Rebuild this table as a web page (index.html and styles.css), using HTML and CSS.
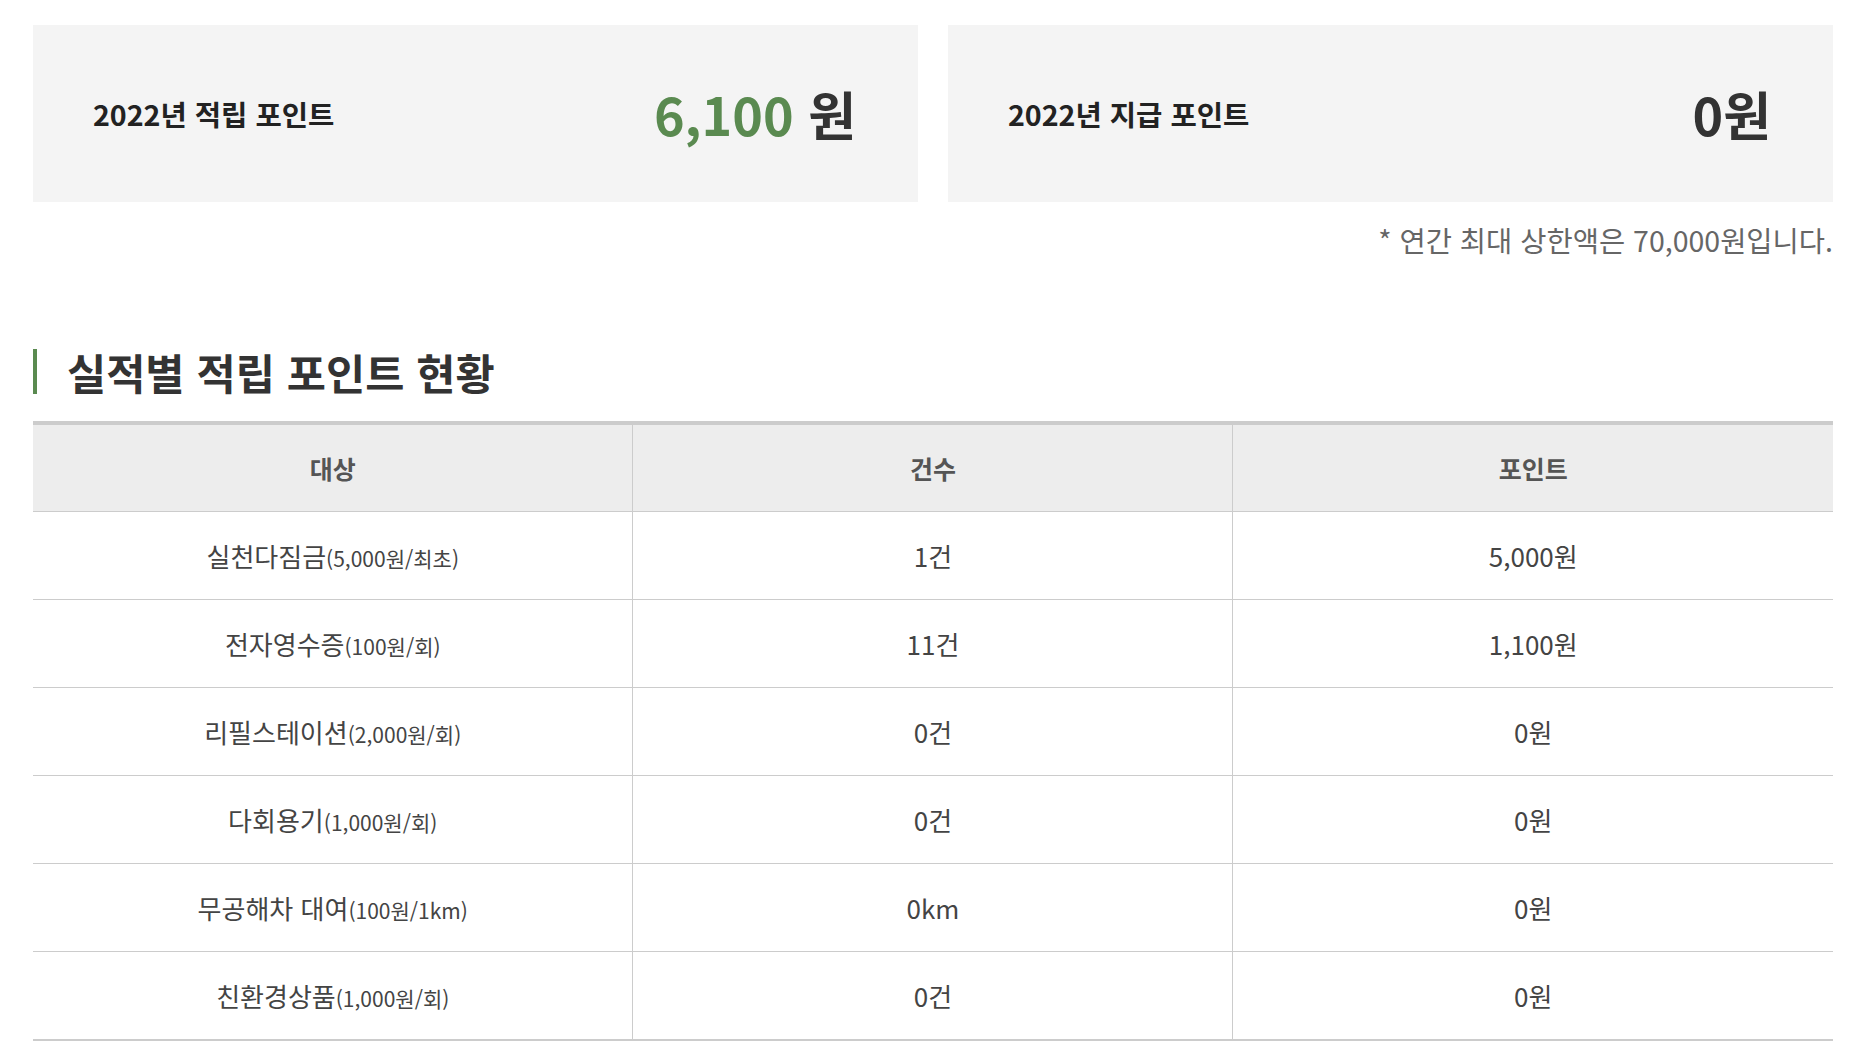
FILE: index.html
```html
<!DOCTYPE html>
<html lang="ko">
<head>
<meta charset="utf-8">
<title>포인트 현황</title>
<link rel="stylesheet" href="styles.css">
</head>
<body>
<div class="page">
  <div class="summary">
    <div class="sum-box">
      <span class="sum-label">2022년 적립 포인트</span>
      <span class="sum-value"><span class="num-green">6,100</span> 원</span>
    </div>
    <div class="sum-box">
      <span class="sum-label">2022년 지급 포인트</span>
      <span class="sum-value">0원</span>
    </div>
  </div>
  <p class="note">* 연간 최대 상한액은 70,000원입니다.</p>

  <h2 class="section-title">실적별 적립 포인트 현황</h2>

  <table class="point-table">
    <colgroup>
      <col class="col-third"><col class="col-third"><col class="col-third">
    </colgroup>
    <thead>
      <tr><th>대상</th><th>건수</th><th>포인트</th></tr>
    </thead>
    <tbody>
      <tr><td>실천다짐금<span class="sub">(5,000원/최초)</span></td><td>1건</td><td>5,000원</td></tr>
      <tr><td>전자영수증<span class="sub">(100원/회)</span></td><td>11건</td><td>1,100원</td></tr>
      <tr><td>리필스테이션<span class="sub">(2,000원/회)</span></td><td>0건</td><td>0원</td></tr>
      <tr><td>다회용기<span class="sub">(1,000원/회)</span></td><td>0건</td><td>0원</td></tr>
      <tr><td>무공해차 대여<span class="sub">(100원/1km)</span></td><td>0km</td><td>0원</td></tr>
      <tr><td>친환경상품<span class="sub">(1,000원/회)</span></td><td>0건</td><td>0원</td></tr>
    </tbody>
  </table>
</div>
</body>
</html>
```
FILE: styles.css
```css
html, body {
  margin: 0;
  padding: 0;
  background: #ffffff;
}
body {
  font-family: "Noto Sans CJK KR", "Noto Sans", sans-serif;
  color: #333333;
}
.page {
  width: 1800px;
  padding: 25px 0 0 33px;
}
.summary {
  display: flex;
  gap: 30px;
}
.sum-box {
  flex: 1;
  height: 177px;
  background: #f4f4f4;
  display: flex;
  align-items: center;
  justify-content: space-between;
  padding: 0 62px 0 60px;
}
.sum-label {
  font-size: 28.6px;
  font-weight: 700;
  color: #222222;
}
.sum-value {
  font-size: 52px;
  font-weight: 700;
  color: #333333;
  line-height: 1;
}
.num-green {
  color: #5a8a50;
}
.note {
  margin: 19px 0 0 0;
  text-align: right;
  font-size: 28.5px;
  line-height: 38px;
  color: #666666;
}
.section-title {
  margin: 90px 0 0 0;
  border-left: 4px solid #5a8a50;
  padding-left: 30px;
  font-size: 42.6px;
  line-height: 45px;
  font-weight: 700;
  color: #333333;
}
.point-table {
  margin-top: 27px;
  width: 100%;
  table-layout: fixed;
  border-collapse: collapse;
  border-top: 4px solid #cccccc;
  border-bottom: 2px solid #cccccc;
}
.col-third {
  width: 33.333%;
}
.point-table th {
  height: 86px;
  background: #ededed;
  font-size: 25px;
  font-weight: 700;
  color: #555555;
  border-bottom: 1px solid #cccccc;
  border-left: 1px solid #cccccc;
  padding: 0;
}
.point-table td {
  height: 87px;
  text-align: center;
  font-size: 26px;
  color: #444444;
  border-bottom: 1px solid #cccccc;
  border-left: 1px solid #cccccc;
  padding: 0;
}
.point-table th:first-child,
.point-table td:first-child {
  border-left: none;
}
.sub {
  font-size: 21px;
}
```
